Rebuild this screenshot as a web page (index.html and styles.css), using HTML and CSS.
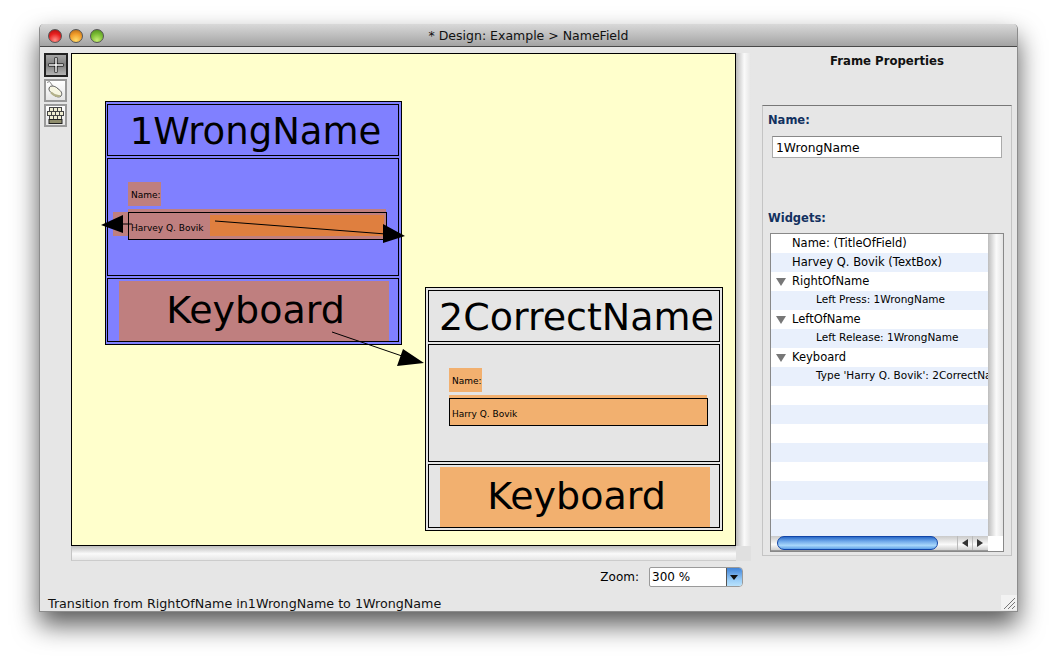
FILE: index.html
```html
<!DOCTYPE html>
<html lang="en">
<head>
  <meta charset="UTF-8">
  <meta name="viewport" content="width=device-width, initial-scale=1.0">
  <title>Design: Example &gt; NameField</title>
  <link rel="stylesheet" href="styles.css">
</head>
<body>
  <div class="window">
    <div class="titlebar">
      <div class="lights">
        <span class="light red"></span>
        <span class="light orange"></span>
        <span class="light green"></span>
      </div>
      <span class="window-title">* Design: Example &gt; NameField</span>
    </div>

    <div class="content">
      <div class="toolbar">
        <button class="tool active">
          <svg width="18" height="18" viewBox="0 0 18 18">
            <path d="M9 1.500v15M1.500 9h15" stroke="#000" stroke-width="3"/>
            <path d="M9 2v14M2 9h14" stroke="#fff" stroke-width="1.500"/>
          </svg>
        </button>
        <button class="tool">
          <svg width="19" height="19" viewBox="0 0 19 19">
            <path d="M1 1.500l2.500-1 3 4" fill="none" stroke="#888" stroke-width="1"/>
            <path d="M6 5c-2 0-3 1.500-3 3 0 1 .5 2 2 3.500l3.500 3c2 1.500 5 2 6.500 .5 1.500-2 .5-4.500-1.500-6l-3-2.500C9 5.500 7.500 5 6 5z" fill="#f7f6e2" stroke="#555" stroke-width="1"/>
            <path d="M5 11.500c2 2 5.500 4 9 3.500" fill="none" stroke="#b3b18a" stroke-width="2"/>
          </svg>
        </button>
        <button class="tool">
          <svg width="19" height="19" viewBox="0 0 19 19">
            <g fill="#efedd2" stroke="#444" stroke-width="1">
              <rect x="3.500" y="1.500" width="4" height="4"/>
              <rect x="7.500" y="1.500" width="4" height="4"/>
              <rect x="11.500" y="1.500" width="4" height="4"/>
              <rect x="1.500" y="5.500" width="4" height="4"/>
              <rect x="5.500" y="5.500" width="4" height="4"/>
              <rect x="9.500" y="5.500" width="4" height="4"/>
              <rect x="13.500" y="5.500" width="4" height="4"/>
              <rect x="3.500" y="9.500" width="4" height="4"/>
              <rect x="7.500" y="9.500" width="4" height="4"/>
              <rect x="11.500" y="9.500" width="4" height="4"/>
            </g>
            <rect x="3" y="13.500" width="13" height="4" fill="#8f8d6c" stroke="#222" stroke-width="1"/>
          </svg>
        </button>
      </div>

      <div class="editor">
        <div class="canvas-row">
          <div class="canvas">
            <div class="frame frame-wrong">
              <div class="frame-box title-box">1WrongName</div>
              <div class="frame-box body-box">
                <div class="widget-label">Name:</div>
                <div class="widget-field">
                  <span class="left-remote"></span>
                  <div class="field-outline">
                    <span class="field-text">Harvey Q. Bovik</span>
                    <span class="field-hot"></span>
                  </div>
                </div>
              </div>
              <div class="frame-box keys-box"><div class="widget-keys">Keyboard</div></div>
            </div>

            <div class="frame frame-correct">
              <div class="frame-box title-box">2CorrectName</div>
              <div class="frame-box body-box">
                <div class="widget-label">Name:</div>
                <div class="widget-field">
                  <div class="field-outline">
                    <span class="field-text">Harry Q. Bovik</span>
                  </div>
                </div>
              </div>
              <div class="frame-box keys-box"><div class="widget-keys">Keyboard</div></div>
            </div>

            <!-- transitions, in canvas coordinates -->
            <svg class="arrows" width="680" height="500" viewBox="72 54 680 500">
              <path d="M215 221L386 234M123 224H132M332 332L402 356" fill="none" stroke="#000" stroke-width="1"/>
              <path d="M383 224L405 236L383 243zM123 215L101 225L123 233zM403 349L424 363L397 366z" fill="#000"/>
            </svg>
          </div>
          <div class="vscroll"></div>
        </div>
        <div class="hscroll-row">
          <div class="hscroll"></div>
          <div class="scroll-corner"></div>
        </div>
        <div class="zoom-row">
          <span class="zoom-label">Zoom:</span>
          <div class="combo">
            <span class="combo-value">300 %</span>
            <span class="combo-btn"></span>
          </div>
        </div>
      </div>

      <div class="panel">
        <h2 class="panel-title">Frame Properties</h2>
        <div class="group">
          <div class="group-label">Name:</div>
          <input class="name-input" type="text" value="1WrongName">
          <div class="group-label widgets-label">Widgets:</div>
          <div class="tree">
            <div class="tree-rows">
              <div class="row"><span class="row-text">Name: (TitleOfField)</span></div>
              <div class="row"><span class="row-text">Harvey Q. Bovik (TextBox)</span></div>
              <div class="row"><span class="twisty"></span><span class="row-text">RightOfName</span></div>
              <div class="row child"><span class="row-text">Left Press: 1WrongName</span></div>
              <div class="row"><span class="twisty"></span><span class="row-text">LeftOfName</span></div>
              <div class="row child"><span class="row-text">Left Release: 1WrongName</span></div>
              <div class="row"><span class="twisty"></span><span class="row-text">Keyboard</span></div>
              <div class="row child"><span class="row-text">Type 'Harry Q. Bovik': 2CorrectName</span></div>
              <div class="row"></div>
              <div class="row"></div>
              <div class="row"></div>
              <div class="row"></div>
              <div class="row"></div>
              <div class="row"></div>
              <div class="row"></div>
              <div class="row"></div>
            </div>
            <div class="tree-vscroll"></div>
            <div class="tree-hscroll">
              <div class="thumb"></div>
              <div class="scroll-arrows">
                <span class="scroll-arrow arrow-left"></span>
                <span class="scroll-arrow arrow-right"></span>
              </div>
            </div>
            <div class="tree-corner"></div>
          </div>
        </div>
      </div>
    </div>

    <div class="statusbar">
      <span>Transition from RightOfName in1WrongName to 1WrongName</span>
      <svg class="grip" width="16" height="15" viewBox="0 0 16 15">
        <path d="M3 14L14 3M7 14L14 7M11 14L14 11" stroke="#777" stroke-width="1" fill="none"/>
      </svg>
    </div>
  </div>
</body>
</html>
```

FILE: styles.css
```css
* {
  box-sizing: border-box;
}
html, body {
  margin: 0;
  height: 100%;
  overflow: hidden;
  background: #fff;
}
body {
  padding: 24px 39px 0;
  font-family: "DejaVu Sans", sans-serif;
  color: #000;
}

/* window chrome */
.window {
  width: 979px;
  height: 588px;
  display: flex;
  flex-direction: column;
  background: #e6e6e6;
  border: 1px solid #8c8c8c;
  border-top: 0;
  border-radius: 5px 5px 0 0;
  box-shadow: 0 13px 26px rgba(0, 0, 0, 0.65);
}
.titlebar {
  position: relative;
  height: 23px;
  flex: none;
  display: flex;
  align-items: center;
  justify-content: center;
  background: linear-gradient(#d9d9d9, #a3a3a3);
  border-bottom: 1px solid #484848;
  border-radius: 5px 5px 0 0;
}
.lights {
  position: absolute;
  left: 8px;
  top: 5px;
  display: flex;
  gap: 7px;
}
.light {
  width: 14px;
  height: 14px;
  border-radius: 50%;
  border: 1px solid #555;
}
.red { background: radial-gradient(circle at 50% 85%, #ff9088, #e8201f 55%, #a01010); }
.orange { background: radial-gradient(circle at 50% 85%, #ffdc6a, #f09a28 55%, #a8641a); }
.green { background: radial-gradient(circle at 50% 85%, #c6ee74, #79bb33 55%, #4a861c); }
.window-title {
  font-size: 12.500px;
  color: #111;
}
.content {
  flex: 1;
  display: flex;
  min-height: 0;
}

/* tools */
.toolbar {
  width: 31px;
  flex: none;
  padding: 6px 0 0 4px;
  display: flex;
  flex-direction: column;
  gap: 2px;
}
.tool {
  width: 23px;
  height: 23px;
  padding: 0;
  display: flex;
  align-items: center;
  justify-content: center;
  background: linear-gradient(#fff, #e6e6e6);
  border: 2px solid #999;
}
.tool.active {
  width: 24px;
  height: 24px;
  background: linear-gradient(#a4a4a4, #808080 50%, #b4b4b4);
  border-color: #222;
}

/* editor */
.editor {
  width: 680px;
  flex: none;
  padding-top: 6px;
}
.canvas-row {
  display: flex;
  height: 493px;
}
.canvas {
  position: relative;
  width: 665px;
  background: #ffc;
  border: 1px solid #000;
}
.vscroll {
  width: 15px;
  background: linear-gradient(90deg, #bbb, #fafafa 55%, #e4e4e4);
}
.hscroll-row {
  display: flex;
  height: 15px;
}
.hscroll {
  width: 665px;
  background: linear-gradient(#bdbdbd, #fafafa 55%, #e6e6e6);
  border-left: 1px solid #c4c4c4;
  border-bottom: 1px solid #ccc;
}
.scroll-corner {
  width: 15px;
  background: #e0e0e0;
}
.zoom-row {
  margin-top: 6px;
  padding-right: 8px;
  display: flex;
  justify-content: flex-end;
  align-items: center;
  gap: 10px;
}
.zoom-label {
  font-size: 12px;
}
.combo {
  width: 94px;
  height: 20px;
  display: flex;
  background: #fff;
  border: 1px solid #9a9a9a;
  border-radius: 2px 4px 4px 2px;
}
.combo-value {
  flex: 1;
  padding-left: 2px;
  font-size: 12px;
  line-height: 18px;
}
.combo-btn {
  position: relative;
  width: 16px;
  background: linear-gradient(#3f83d8, #9ed0f8 70%, #b9e2fc);
  border-left: 1px solid #555;
  border-radius: 0 3px 3px 0;
}
.combo-btn::after {
  content: "";
  position: absolute;
  left: 3px;
  top: 7px;
  border: 4px solid transparent;
  border-top: 5px solid #111;
  border-bottom: 0;
}

/* frames on the canvas */
.frame {
  position: absolute;
  width: 297px;
  height: 244px;
  padding: 2px;
  display: flex;
  flex-direction: column;
  gap: 2px;
  border: 1px solid #000;
}
.frame-wrong {
  left: 33px;
  top: 47px;
  padding-left: 1px;
  background: #8080ff;
}
.frame-correct {
  left: 353px;
  top: 233px;
  width: 298px;
  background: #e5e5e5;
}
.frame-box {
  border: 1px solid #000;
}
.title-box {
  height: 52px;
  padding-left: 5px;
  font-size: 37px;
  line-height: 53px;
  text-align: center;
  white-space: nowrap;
}
.frame-correct .title-box {
  font-size: 38px;
  line-height: 52px;
}
.body-box {
  height: 118px;
  padding: 23px 12px 0 20px;
}
.keys-box {
  height: 64px;
  padding: 2px 9px 0 11px;
}
.widget-label {
  width: 33px;
  height: 24px;
  padding-left: 3px;
  font-size: 9px;
  line-height: 26px;
  background: #bf7f7f;
}
.widget-field {
  position: relative;
  height: 31px;
  margin-top: 3px;
  padding-top: 3px;
  background: #bf7f7f;
}
.left-remote {
  position: absolute;
  left: -15px;
  top: 3px;
  width: 15px;
  height: 24px;
  background: #bf7f7f;
}
.field-outline {
  position: relative;
  height: 28px;
  margin-right: -1px;
  padding-left: 2px;
  display: flex;
  border: 1px solid #000;
  font-size: 9px;
  line-height: 30px;
}
.field-text {
  width: 79px;
  white-space: nowrap;
}
.field-hot {
  width: 174px;
  height: 21px;
  margin-top: 2px;
  background: #df7f3f;
}
.widget-keys {
  height: 60px;
  padding-left: 3px;
  font-size: 38px;
  line-height: 59px;
  text-align: center;
  background: #bf7f7f;
}
.frame-correct .widget-label,
.frame-correct .widget-field,
.frame-correct .widget-keys {
  background: #f2b06f;
}
.arrows {
  position: absolute;
  left: 0;
  top: 0;
  overflow: visible;
  pointer-events: none;
  z-index: 2;
}

/* properties panel */
.panel {
  flex: 1;
  padding: 7px 5px 0 11px;
}
.panel-title {
  margin: 0 0 37px;
  height: 14px;
  font-size: 11.700px;
  line-height: 14px;
  text-align: center;
  color: #111;
}
.group {
  height: 451px;
  padding: 7px 7px 3px 5px;
  border: 1px solid #c4c4c4;
  border-top-color: #777;
  display: flex;
  flex-direction: column;
}
.group-label {
  flex: none;
  height: 14px;
  font-size: 11.500px;
  font-weight: bold;
  line-height: 14px;
  color: #12315f;
}
.name-input {
  flex: none;
  width: 230px;
  height: 22px;
  margin: 9px 0 0 4px;
  padding: 1px 0 0 3px;
  font: 12.300px "DejaVu Sans", sans-serif;
  background: #fff;
  border: 1px solid #aaa;
  border-top-color: #888;
}
.widgets-label {
  margin-top: 53px;
  line-height: 15px;
}
.tree {
  width: 234px;
  min-height: 0;
  margin: 8px 0 0 2px;
  flex: 1;
  display: grid;
  grid-template-columns: 217px 15px;
  grid-template-rows: minmax(0, 1fr) 15px;
  background: #fff;
  border: 1px solid #888;
}
.tree-rows {
  overflow: hidden;
}
.row {
  position: relative;
  height: 19px;
  padding-left: 21px;
  font-size: 11.500px;
  line-height: 19px;
  white-space: nowrap;
}
.row:nth-child(even) {
  background: #e9f0fc;
}
.row.child {
  padding-left: 45px;
  font-size: 10.500px;
  line-height: 17px;
}
.twisty {
  position: absolute;
  left: 5px;
  top: 6px;
  border: 5px solid transparent;
  border-top: 8px solid #777;
  border-bottom: 0;
}
.tree-vscroll {
  background: linear-gradient(90deg, #bdbdbd, #fafafa 55%, #e4e4e4);
}
.tree-hscroll {
  position: relative;
  background: linear-gradient(#c9c9c9, #fafafa 60%, #d0d0d0);
  border-bottom: 1px solid #999;
}
.thumb {
  position: absolute;
  left: 6px;
  top: 0;
  width: 161px;
  height: 14px;
  background: linear-gradient(#2a69c8, #6ea8ea 35%, #a9d8fb 70%, #5d9fe6);
  border: 1px solid #1145a8;
  border-radius: 7px;
}
.scroll-arrows {
  position: absolute;
  right: 1px;
  top: 0;
  display: flex;
}
.scroll-arrow {
  width: 15px;
  height: 14px;
  display: flex;
  align-items: center;
  justify-content: center;
  border-left: 1px solid #bbb;
}
.scroll-arrow::after {
  content: "";
  border: 4px solid transparent;
}
.arrow-left::after {
  border-right: 6px solid #333;
  border-left: 0;
}
.arrow-right::after {
  border-left: 6px solid #333;
  border-right: 0;
}
.tree-corner {
  background: #fff;
}

/* status line */
.statusbar {
  flex: none;
  height: 16px;
  padding-left: 8px;
  display: flex;
  justify-content: space-between;
  font-size: 12.700px;
  line-height: 17px;
  color: #111;
}
.grip {
  background: #f2f2f2;
}
```
